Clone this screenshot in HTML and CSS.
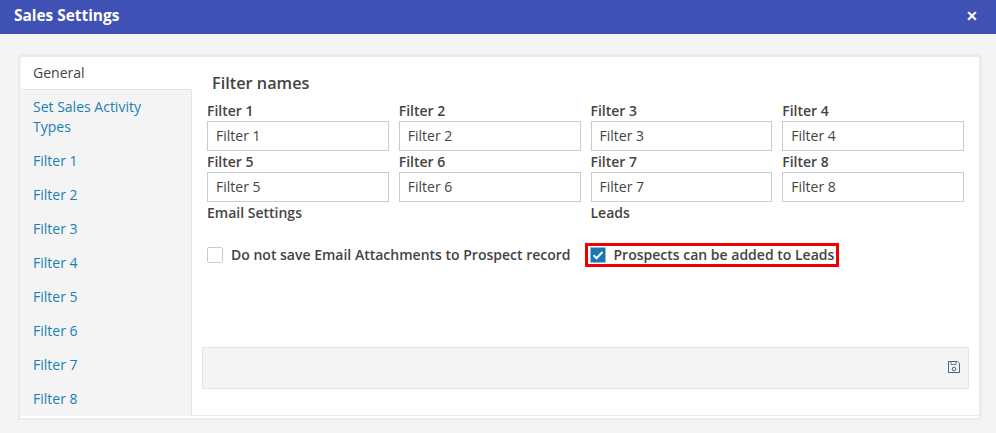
FILE: index.html
```html
<!DOCTYPE html>
<html lang="en">
<head>
    <meta charset="UTF-8">
    <meta name="viewport" content="width=device-width, initial-scale=1.0">
    <title>Sales Settings</title>
    <link rel="stylesheet" href="styles.css">
</head>
<body>

    <div class="modal-header">
        <h1>Sales Settings</h1>
        <span class="close">&#10005;</span>
    </div>

    <div class="modal-body">
        <div class="panel">

            <ul class="side-nav">
                <li class="active"><a>General</a></li>
                <li><a>Set Sales Activity Types</a></li>
                <li><a>Filter 1</a></li>
                <li><a>Filter 2</a></li>
                <li><a>Filter 3</a></li>
                <li><a>Filter 4</a></li>
                <li><a>Filter 5</a></li>
                <li><a>Filter 6</a></li>
                <li><a>Filter 7</a></li>
                <li><a>Filter 8</a></li>
            </ul>

            <div class="content">
                <h2>Filter names</h2>

                <div class="field-grid">
                    <div class="field"><label for="f1">Filter 1</label><input type="text" id="f1" value="Filter 1"></div>
                    <div class="field"><label for="f2">Filter 2</label><input type="text" id="f2" value="Filter 2"></div>
                    <div class="field"><label for="f3">Filter 3</label><input type="text" id="f3" value="Filter 3"></div>
                    <div class="field"><label for="f4">Filter 4</label><input type="text" id="f4" value="Filter 4"></div>
                    <div class="field"><label for="f5">Filter 5</label><input type="text" id="f5" value="Filter 5"></div>
                    <div class="field"><label for="f6">Filter 6</label><input type="text" id="f6" value="Filter 6"></div>
                    <div class="field"><label for="f7">Filter 7</label><input type="text" id="f7" value="Filter 7"></div>
                    <div class="field"><label for="f8">Filter 8</label><input type="text" id="f8" value="Filter 8"></div>
                </div>

                <div class="section-titles">
                    <div>Email Settings</div>
                    <div>Leads</div>
                </div>

                <div class="check-row">
                    <div class="check">
                        <span class="box"></span>
                        <span>Do not save Email Attachments to Prospect record</span>
                    </div>
                    <div class="check highlighted">
                        <span class="box checked">
                            <svg width="14" height="14" viewBox="0 0 14 14"><path d="M2.5 7.2l3 3 6-6.2" fill="none" stroke="#fff" stroke-width="2"/></svg>
                        </span>
                        <span>Prospects can be added to Leads</span>
                    </div>
                </div>

                <div class="toolbar">
                    <svg width="14" height="14" viewBox="0 0 14 14" fill="none" stroke="#2f6ea5" stroke-width="1">
                        <path d="M1.5 1.5h9l2 2v9h-11z"/>
                        <path d="M4 1.5v3h5v-3" stroke="#777"/>
                        <circle cx="7" cy="9" r="1.8" stroke="#7a5a50"/>
                    </svg>
                </div>
            </div>

        </div>
    </div>

</body>
</html>
```

FILE: styles.css
```css
* {
    box-sizing: border-box;
}

html, body {
    height: 100%;
}

body {
    margin: 0;
    background-color: #f4f4f4;
    font-family: "Open Sans", sans-serif;
    font-size: 14px;
    line-height: 20px;
    color: #444;
    overflow: hidden;
}

.modal-header {
    height: 34px;
    padding: 0 18px 2px 14px;
    display: flex;
    align-items: center;
    justify-content: space-between;
    background-color: #3f51b5;
    color: white;
}

.modal-header h1 {
    margin: 0;
    font-size: 15.4px;
    font-weight: 700;
}

.close {
    font-size: 14px;
    font-weight: 700;
}

.modal-body {
    padding: 20px 14px 0 18px;
}

.panel {
    display: flex;
    align-items: flex-start;
    height: 366px;
    border: 3px solid #ebebeb;
    border-bottom-width: 2px;
    border-left-width: 2px;
    background-color: white;
}

.side-nav {
    width: 172px;
    height: 359px;
    margin: 0;
    padding: 0;
    list-style: none;
    background-color: #f4f4f4;
    border-right: 1px solid #e3e3e3;
}

.side-nav li {
    padding: 7px 13px;
    color: #1a7fb5;
}

.side-nav li.active {
    height: 33px;
    margin: 0 -1px 0 1px;
    padding: 6px 12px 0;
    background-color: white;
    color: #444;
    border-bottom: 1px solid #e3e3e3;
    border-right: 1px solid white;
    border-radius: 2px 0 0 2px;
}

.content {
    flex: 1;
    height: 359px;
    padding: 15px 10px 0 15px;
    border-bottom: 1px solid #ebebeb;
}

.content h2 {
    margin: 0 0 7px 5px;
    font-size: 16.3px;
    line-height: 22px;
    font-weight: 600;
}

.field-grid {
    display: grid;
    grid-template-columns: repeat(4, 1fr);
    gap: 0 10px;
    width: 757px;
}

.field {
    height: 51px;
}

.field label {
    display: block;
    height: 20px;
    font-weight: 600;
}

.field input {
    display: block;
    width: 100%;
    height: 30px;
    padding: 0 8px 2px;
    border: 1px solid #ccc;
    background-color: white;
    color: #444;
    font-family: inherit;
    font-size: 14px;
}

.section-titles {
    display: grid;
    grid-template-columns: repeat(2, 1fr);
    gap: 10px;
    width: 757px;
    font-weight: 600;
}

.check-row {
    display: flex;
    align-items: center;
    margin-top: 20px;
    font-weight: 600;
}

.check {
    display: flex;
    align-items: center;
    gap: 8px;
}

.check.highlighted {
    margin-left: 14px;
    width: 254px;
    height: 24px;
    padding-left: 2px;
    border: 3px solid #f00000;
}

.box {
    width: 16px;
    height: 16px;
    border: 1px solid #ccc;
    border-radius: 2px;
    background-color: white;
}

.box.checked {
    border-color: #8fb9d4;
    border-radius: 1px;
    background-color: #1a76ae;
}

.box svg {
    display: block;
}

.toolbar {
    display: flex;
    align-items: center;
    justify-content: flex-end;
    width: 767px;
    height: 42px;
    margin: 80px 0 0 -5px;
    padding: 0 7px 2px 0;
    border: 1px solid #e3e3e3;
    background-color: #f4f4f4;
}
```
